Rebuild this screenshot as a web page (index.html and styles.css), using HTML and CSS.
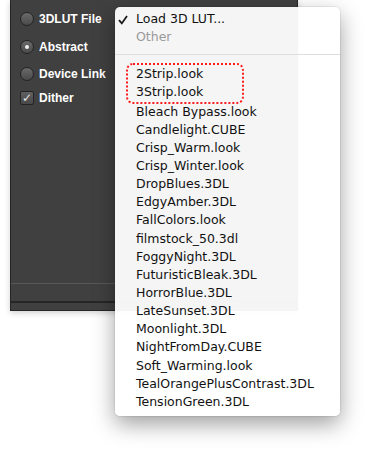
FILE: index.html
```html
<!DOCTYPE html>
<html lang="en">
<head>
    <meta charset="UTF-8">
    <title>3D LUT</title>
    <link rel="stylesheet" href="styles.css">
</head>
<body>
    <div class="panel">
        <div class="options">
            <label class="option opt-file"><span class="radio"></span>3DLUT File</label>
            <label class="option opt-abstract"><span class="radio on"></span>Abstract</label>
            <label class="option opt-device"><span class="radio"></span>Device Link</label>
            <label class="option opt-dither"><span class="check">&#10003;</span>Dither</label>
        </div>
        <div class="panel-foot">
            <div class="foot-row"></div>
            <div class="foot-row small"></div>
        </div>
    </div>

    <!-- popup menu over the panel -->
    <div class="menu">
        <div class="item checked">
            <svg class="tick" width="10" height="10" viewBox="0 0 10 10"><path d="M1 5.2 L3.8 8.4 L9 1" fill="none" stroke="#1a1a1a" stroke-width="1.8"/></svg>
            Load 3D LUT...
        </div>
        <div class="item disabled">Other</div>
        <div class="sep"></div>
        <div class="marked">
            <div class="item">2Strip.look</div>
            <div class="item">3Strip.look</div>
        </div>
        <div class="item">Bleach Bypass.look</div>
        <div class="item">Candlelight.CUBE</div>
        <div class="item">Crisp_Warm.look</div>
        <div class="item">Crisp_Winter.look</div>
        <div class="item">DropBlues.3DL</div>
        <div class="item">EdgyAmber.3DL</div>
        <div class="item">FallColors.look</div>
        <div class="item">filmstock_50.3dl</div>
        <div class="item">FoggyNight.3DL</div>
        <div class="item">FuturisticBleak.3DL</div>
        <div class="item">HorrorBlue.3DL</div>
        <div class="item">LateSunset.3DL</div>
        <div class="item">Moonlight.3DL</div>
        <div class="item">NightFromDay.CUBE</div>
        <div class="item">Soft_Warming.look</div>
        <div class="item">TealOrangePlusContrast.3DL</div>
        <div class="item">TensionGreen.3DL</div>
    </div>
</body>
</html>
```

FILE: styles.css
```css
body {
    margin: 0;
    background-color: #ffffff;
    font-family: 'DejaVu Sans', sans-serif;
    position: relative;
    height: 462px;
    overflow: hidden;
}
.panel {
    margin-left: 10px;
    width: 286px;
    height: 310px;
    background-color: #404040;
    border: 1px solid #262626;
    border-top: none;
    box-shadow: 0 2px 6px rgba(0, 0, 0, 0.18);
    display: flex;
    flex-direction: column;
}
.options {
    flex: 1;
    display: flex;
    flex-direction: column;
    padding: 10px 0 0 9px;
}
.option {
    display: flex;
    align-items: center;
    gap: 5px;
    color: #ffffff;
    font-family: 'Liberation Sans', sans-serif;
    font-size: 12px;
    font-weight: bold;
    height: 17px;
}
.opt-abstract {
    margin-top: 11px;
}
.opt-device {
    margin-top: 10px;
}
.opt-dither {
    margin-top: 7px;
}
.radio {
    width: 12px;
    height: 12px;
    border-radius: 50%;
    border: 1px solid #232323;
    background: linear-gradient(#6a6a6a, #4a4a4a);
    display: flex;
    align-items: center;
    justify-content: center;
}
.radio.on::after {
    content: "";
    width: 4px;
    height: 4px;
    border-radius: 50%;
    background-color: #f0f0f0;
}
.check {
    width: 12px;
    height: 12px;
    border: 1px solid #232323;
    border-radius: 2px;
    background: linear-gradient(#606060, #484848);
    color: #e8e8e8;
    font-family: 'DejaVu Sans', sans-serif;
    font-size: 12px;
    line-height: 12px;
    text-align: center;
    font-weight: normal;
}
.panel-foot {
    border-top: 1px solid #585858;
}
.foot-row {
    height: 17px;
    border-bottom: 2px solid #262626;
}
.foot-row.small {
    height: 7px;
    border-bottom: none;
}
.menu {
    position: absolute;
    left: 115px;
    top: 7px;
    width: 225px;
    padding: 3px 0 5px;
    background-color: rgba(255, 255, 255, 0.95);
    border-radius: 5px;
    box-shadow: 0 8px 22px rgba(0, 0, 0, 0.38), 0 0 0 1px rgba(0, 0, 0, 0.06);
}
.item {
    height: 18.15px;
    line-height: 18px;
    padding-left: 21px;
    font-size: 12.5px;
    color: #111111;
    white-space: nowrap;
    position: relative;
}
.tick {
    position: absolute;
    left: 3px;
    top: 5px;
}
.disabled {
    color: #9a9a9a;
}
.sep {
    height: 1px;
    background-color: #dedede;
    margin: 8px 0 9px;
}
.marked {
    margin-left: 11px;
    margin-right: 96px;
    border: 2px dotted #ff1a1a;
    border-radius: 7px;
    margin-top: -1px;
    margin-bottom: -1px;
}
.marked .item {
    padding-left: 8px;
}
```
